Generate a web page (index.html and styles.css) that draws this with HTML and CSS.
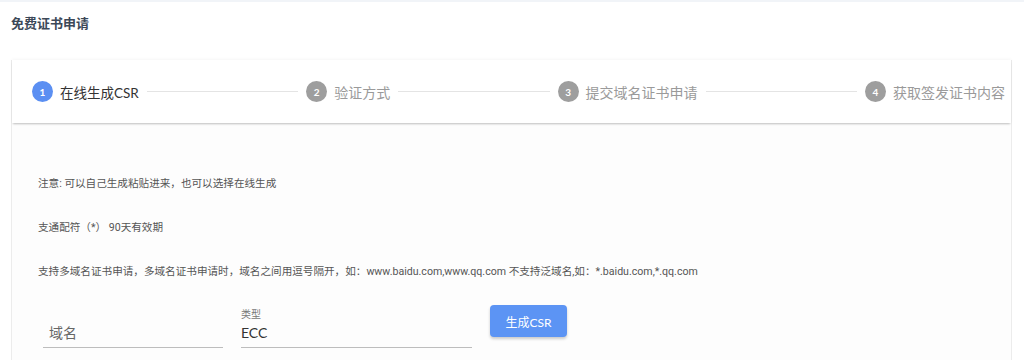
FILE: index.html
```html
<!DOCTYPE html>
<html lang="zh-CN">
<head>
  <meta charset="UTF-8" />
  <meta name="viewport" content="width=device-width, initial-scale=1.0" />
  <title>免费证书申请</title>
  <link rel="stylesheet" href="styles.css">
</head>
<body>
  <div class="page">
    <h1 class="title">免费证书申请</h1>

    <div class="card">
      <div class="stepper">
        <div class="step active">
          <span class="step-num">1</span>
          <span class="step-label">在线生成CSR</span>
        </div>
        <div class="divider"></div>
        <div class="step">
          <span class="step-num">2</span>
          <span class="step-label">验证方式</span>
        </div>
        <div class="divider"></div>
        <div class="step">
          <span class="step-num">3</span>
          <span class="step-label">提交域名证书申请</span>
        </div>
        <div class="divider"></div>
        <div class="step">
          <span class="step-num">4</span>
          <span class="step-label">获取签发证书内容</span>
        </div>
      </div>

      <div class="content">
        <p class="note">注意: 可以自己生成粘贴进来，也可以选择在线生成</p>
        <p class="note">支通配符（*） 90天有效期</p>
        <p class="note">支持多域名证书申请，多域名证书申请时，域名之间用逗号隔开，如：www.baidu.com,www.qq.com 不支持泛域名,如：*.baidu.com,*.qq.com</p>

        <div class="form-row">
          <div class="field field-domain">
            <label class="field-label"></label>
            <input class="field-input" type="text" placeholder="域名">
          </div>
          <div class="field field-type">
            <label class="field-label">类型</label>
            <div class="field-input">ECC</div>
          </div>
          <button class="btn">生成CSR</button>
        </div>
      </div>
    </div>
  </div>
</body>
</html>
```

FILE: styles.css
```css
body, html {
  margin: 0;
  padding: 0;
  height: 100%;
  overflow: hidden;
  background: #fff;
  font-family: Lato, "Noto Sans CJK SC", sans-serif;
}
.page {
  border-top: 2px solid #f1f4f8;
  padding: 0 12px 0 11px;
}
.title {
  margin: 0;
  padding-top: 11px;
  height: 20px;
  line-height: 20px;
  font-size: 13px;
  font-weight: bold;
  color: #3c4858;
}
.card {
  margin-top: 27px;
  background: #fdfdfd;
  border-left: 1px solid #ececec;
  border-right: 1px solid #ececec;
  height: 300px;
}
.stepper {
  display: flex;
  align-items: center;
  height: 63px;
  padding: 0 6px 0 20px;
  background: #fff;
  box-shadow: 0 2px 2px -1px rgba(0,0,0,0.25), 0 -1px 3px rgba(0,0,0,0.04);
  position: relative;
}
.step {
  display: flex;
  align-items: center;
  gap: 7px;
}
.step-num {
  width: 21px;
  height: 21px;
  border-radius: 50%;
  background: #9e9e9e;
  color: #fff;
  font-size: 10px;
  font-weight: bold;
  display: flex;
  justify-content: center;
  align-items: center;
}
.step-label {
  font-size: 14px;
  color: #9a9a9a;
  white-space: nowrap;
}
.step.active .step-num { background: #5b8ff2; }
.step.active .step-label {
  font-size: 13.5px;
  color: #333;
}
.divider {
  flex: 1;
  height: 1px;
  background: #e4e4e4;
  margin: 0 8px;
}
.content {
  padding: 54px 0 0 26px;
}
.note {
  margin: 0 0 30px;
  height: 14px;
  line-height: 14px;
  font-family: Roboto, "Noto Sans CJK SC", sans-serif;
  font-size: 10.6px;
  color: #555;
  white-space: nowrap;
}
.form-row {
  display: flex;
  align-items: flex-start;
  gap: 18px;
  margin: -9px 0 0 5px;
}
.field {
  display: flex;
  flex-direction: column;
  padding: 8px 0 3px;
  border-bottom: 1px solid #bdbdbd;
}
.field-domain { width: 180px; }
.field-domain .field-input { padding-left: 6px; }
.field-type { width: 231px; }
.field-label {
  height: 12px;
  line-height: 12px;
  font-size: 10px;
  color: #777;
  margin-bottom: 2px;
}
.field-input {
  height: 22px;
  line-height: 22px;
  font-family: Lato, "Noto Sans CJK SC", sans-serif;
  font-size: 14px;
  color: #333;
  border: none;
  outline: none;
  background: transparent;
  padding: 0;
  margin: 0;
}
.field-input::placeholder {
  color: #666;
}
.btn {
  margin-top: 5px;
  width: 77px;
  height: 32px;
  border: none;
  border-radius: 4px;
  background: #5c94f4;
  color: #fff;
  font-family: Lato, "Noto Sans CJK SC", sans-serif;
  font-size: 12px;
  box-shadow: 0 2px 3px rgba(0,0,0,0.2);
  cursor: pointer;
}
```
